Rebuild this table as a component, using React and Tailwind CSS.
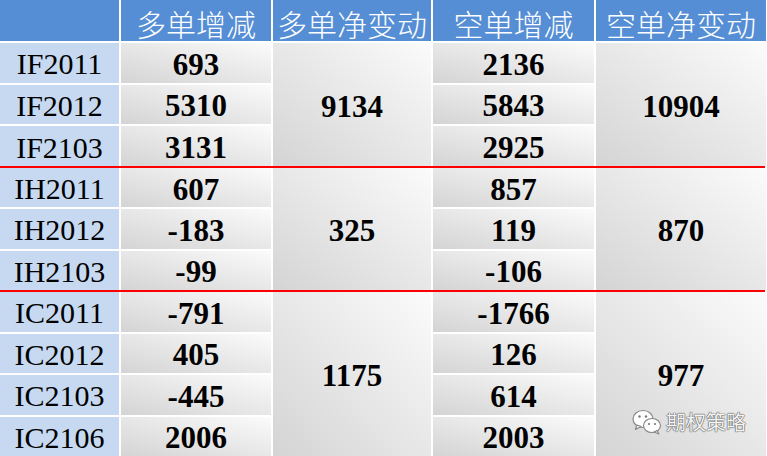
import React from 'react'

const headers = ['', '多单增减', '多单净变动', '空单增减', '空单净变动']

const groups = [
    { box: 'h-[123px] grid-rows-3', span: 'row-span-3', rows: [['IF2011', '693', '2136'], ['IF2012', '5310', '5843'], ['IF2103', '3131', '2925']], longNet: '9134', shortNet: '10904' },
    { box: 'h-[122px] grid-rows-3', span: 'row-span-3', rows: [['IH2011', '607', '857'], ['IH2012', '-183', '119'], ['IH2103', '-99', '-106']], longNet: '325', shortNet: '870' },
    { box: 'h-[164px] grid-rows-4', span: 'row-span-4', rows: [['IC2011', '-791', '-1766'], ['IC2012', '405', '126'], ['IC2103', '-445', '614'], ['IC2106', '2006', '2003']], longNet: '1175', shortNet: '977', mark: true },
]

const rowStart = ['row-start-1', 'row-start-2', 'row-start-3', 'row-start-4']
const cols = 'grid-cols-[119px_150px_158px_161px_170px]'
const num = 'min-h-0 leading-none pt-[3px] flex items-center justify-center bg-linear-to-tr from-[#d4d4d4] to-[#fbfbfb] font-bold text-[31px] text-black'

function WeChat() {
    return (
        <svg width="30" height="26" viewBox="0 0 30 26">
            <ellipse cx="11" cy="10" rx="10" ry="8.5" fill="#fff" stroke="#888" strokeWidth="1.2" />
            <path d="M5 16 L3.5 20.5 L9 17.5 Z" fill="#fff" stroke="#888" strokeWidth="1.2" strokeLinejoin="round" />
            <circle cx="7.5" cy="7.5" r="1.2" fill="#777" />
            <circle cx="14" cy="7.5" r="1.2" fill="#777" />
            <ellipse cx="20" cy="16.5" rx="8.5" ry="7" fill="#fff" stroke="#888" strokeWidth="1.2" />
            <path d="M25 21.5 L27 25 L22 23 Z" fill="#fff" stroke="#888" strokeWidth="1.2" strokeLinejoin="round" />
            <circle cx="17" cy="15" r="1.1" fill="#777" />
            <circle cx="23" cy="15" r="1.1" fill="#777" />
        </svg>
    )
}

export default function App() {
    return (
        <div className="w-[767px] h-[456px] bg-white overflow-hidden flex flex-col font-['Liberation_Serif','Times_New_Roman',serif]">
            <div className={`grid ${cols} gap-x-[2px] h-[41px] shrink-0 mb-[2px]`}>
                {headers.map((t, i) => (
                    <div key={i} className="bg-[#558ed5] text-white text-[30px] leading-none font-light pt-[4px] flex items-center justify-center font-['Noto_Sans_CJK_SC',sans-serif]">
                        {t}
                    </div>
                ))}
            </div>
            {groups.map((g, gi) => (
                <React.Fragment key={gi}>
                    {gi > 0 && <div className="h-[2px] w-[765px] shrink-0 bg-[#ff0000]" />}
                    <div className={`grid ${cols} gap-[2px] shrink-0 ${g.box}`}>
                        {g.rows.map((r, ri) => (
                            <React.Fragment key={ri}>
                                <div className={`col-start-1 ${rowStart[ri]} min-h-0 leading-none pt-[3px] bg-[#c6d9f1] flex items-center justify-center text-[30px] text-black`}>{r[0]}</div>
                                <div className={`col-start-2 ${rowStart[ri]} ${num}`}>{r[1]}</div>
                                <div className={`col-start-4 ${rowStart[ri]} ${num}`}>{r[2]}</div>
                            </React.Fragment>
                        ))}
                        <div className={`col-start-3 row-start-1 ${g.span} ${num}`}>{g.longNet}</div>
                        <div className={`col-start-5 row-start-1 ${g.span} ${num} relative`}>
                            {g.shortNet}
                            {g.mark && (
                                <div className="absolute right-[20px] bottom-[21px] flex items-center gap-[4px]">
                                    <WeChat />
                                    <span className="text-[20px] font-normal text-[#f4f4f4] font-['Noto_Sans_CJK_SC',sans-serif] [text-shadow:0_0_1px_#555,0_0_1px_#555,0_0_1px_#555]">期权策略</span>
                                </div>
                            )}
                        </div>
                    </div>
                </React.Fragment>
            ))}
        </div>
    )
}
